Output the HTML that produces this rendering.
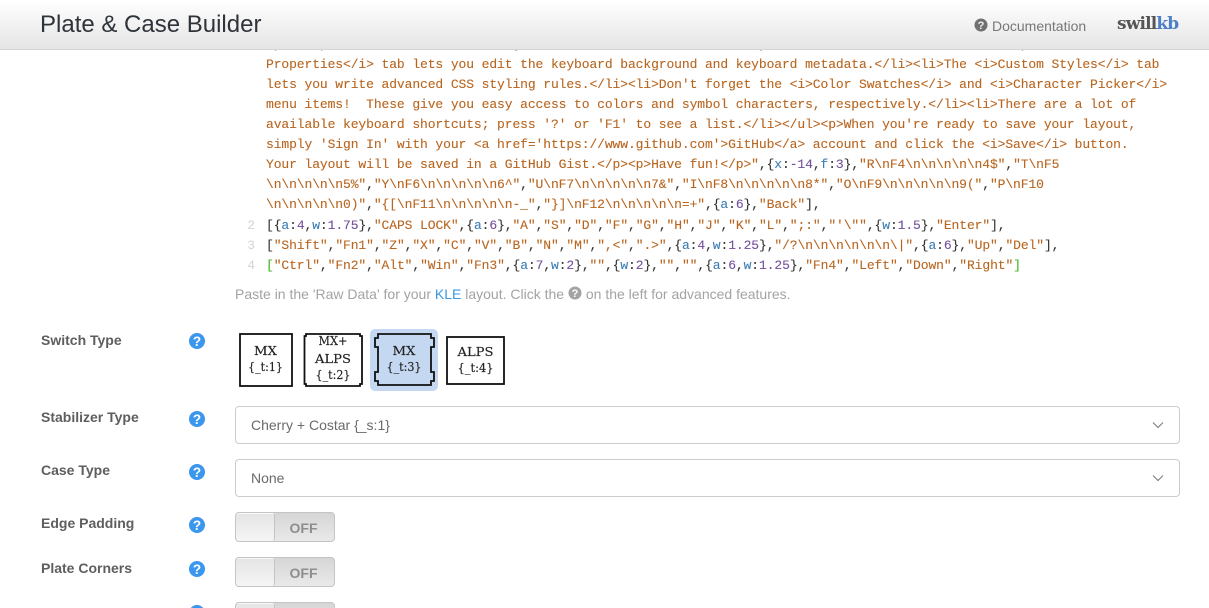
<!DOCTYPE html>
<html>
<head>
<meta charset="utf-8">
<style>
html,body{margin:0;padding:0;background:#fff;width:1209px;height:608px;overflow:hidden;}
#wrap{position:relative;width:1209px;height:608px;overflow:hidden;font-family:"Liberation Sans",Arial,sans-serif;}
.abs{position:absolute;white-space:pre;}
#hdr{position:absolute;left:0;top:0;width:1209px;height:49px;background:linear-gradient(#fff,#e5e5e5);border-bottom:1px solid #d4d4d4;z-index:5;}
.cl{position:absolute;left:266px;white-space:pre;font-family:"Liberation Mono",monospace;font-size:13px;letter-spacing:-.1px;line-height:20px;height:20px;color:#333;-webkit-text-stroke:.1px currentColor;}
.s{color:#b8651f;}
.k{color:#3a7db5;}
.n{color:#74509c;}
.g{color:#3cb521;}
.d{color:#333;}
.ln{position:absolute;left:238px;width:17px;text-align:right;font-family:"Liberation Mono",monospace;font-size:13px;line-height:20px;color:#d4d4d4;}
.lab{position:absolute;left:41px;font-size:14px;font-weight:bold;color:#5e5e5e;white-space:pre;line-height:16px;}
.q{position:absolute;left:189px;width:16px;height:16px;}
.sel{position:absolute;left:235px;width:943px;height:36px;border:1px solid #ccc;border-radius:4px;background:#fff;font-size:14px;color:#6a6a6a;line-height:36px;}
.sel span{position:absolute;left:15px;top:0;}
.sel svg{position:absolute;right:15px;top:14px;}
.tg{position:absolute;left:235px;width:98px;height:28px;border:1px solid #c4c4c4;border-radius:4px;background:linear-gradient(#d6d6d6,#e9e9e9);overflow:hidden;}
.tg i{position:absolute;left:0;top:0;width:39px;height:28px;background:linear-gradient(#e5e5e5,#f5f5f5);border-right:1px solid #c4c4c4;border-top:1px solid #f8f8f8;box-sizing:border-box;border-radius:3px;}
.tg b{position:absolute;left:39px;width:57px;top:0;text-align:center;font-size:14px;line-height:30px;color:#8e8e8e;font-style:normal;}
svg.keys text{font-family:"DejaVu Serif","Liberation Serif",serif;font-size:12px;fill:#222;stroke:#222;stroke-width:.15px;text-anchor:middle;}
</style>
</head>
<body>
<div id="wrap">
<div id="hdr">
  <div class="abs" style="left:40px;top:10px;font-size:24px;line-height:30px;color:#2f343a;">Plate &amp; Case Builder</div>
  <svg class="abs" style="left:974px;top:18px;" width="14" height="14" viewBox="0 0 14 14"><circle cx="7" cy="7" r="6.5" fill="#707070"/><text x="7" y="11" text-anchor="middle" font-size="11" font-weight="bold" fill="#f0f0f0" style="font-family:'Liberation Sans',sans-serif">?</text></svg>
  <div class="abs" style="left:992px;top:18px;font-size:14px;line-height:17px;color:#777;">Documentation</div>
  <div class="abs" style="left:1117px;top:14px;font-family:'DejaVu Serif',serif;font-size:17px;font-weight:bold;line-height:20px;letter-spacing:-.85px;color:#555;">swill<span style="color:#4d7fc4">kb</span></div>
</div>

<div class="cl s" style="top:35px;"> p     p                        g                               y                                 p</div>
<div class="cl s" style="top:55px;">Properties&lt;/i&gt; tab lets you edit the keyboard background and keyboard metadata.&lt;/li&gt;&lt;li&gt;The &lt;i&gt;Custom Styles&lt;/i&gt; tab</div>
<div class="cl s" style="top:75px;">lets you write advanced CSS styling rules.&lt;/li&gt;&lt;li&gt;Don't forget the &lt;i&gt;Color Swatches&lt;/i&gt; and &lt;i&gt;Character Picker&lt;/i&gt;</div>
<div class="cl s" style="top:95px;">menu items!  These give you easy access to colors and symbol characters, respectively.&lt;/li&gt;&lt;li&gt;There are a lot of</div>
<div class="cl s" style="top:115px;">available keyboard shortcuts; press '?' or 'F1' to see a list.&lt;/li&gt;&lt;/ul&gt;&lt;p&gt;When you're ready to save your layout,</div>
<div class="cl s" style="top:135px;">simply 'Sign In' with your &lt;a href='https://www.github.com'&gt;GitHub&lt;/a&gt; account and click the &lt;i&gt;Save&lt;/i&gt; button.</div>
<div class="cl s" style="top:155px;">Your layout will be saved in a GitHub Gist.&lt;/p&gt;&lt;p&gt;Have fun!&lt;/p&gt;"<span class="d">,{</span><span class="k">x</span><span class="d">:</span><span class="n">-14</span><span class="d">,</span><span class="k">f</span><span class="d">:</span><span class="n">3</span><span class="d">},</span>"R\nF4\n\n\n\n\n4$"<span class="d">,</span>"T\nF5</div>
<div class="cl s" style="top:175px;">\n\n\n\n\n5%"<span class="d">,</span>"Y\nF6\n\n\n\n\n6^"<span class="d">,</span>"U\nF7\n\n\n\n\n7&amp;"<span class="d">,</span>"I\nF8\n\n\n\n\n8*"<span class="d">,</span>"O\nF9\n\n\n\n\n9("<span class="d">,</span>"P\nF10</div>
<div class="cl s" style="top:195px;">\n\n\n\n\n0)"<span class="d">,</span>"{[\nF11\n\n\n\n\n-_"<span class="d">,</span>"}]\nF12\n\n\n\n\n=+"<span class="d">,{</span><span class="k">a</span><span class="d">:</span><span class="n">6</span><span class="d">},</span>"Back"<span class="d">],</span></div>
<div class="ln" style="top:216px;">2</div>
<div class="cl" style="top:216px;">[{<span class="k">a</span>:<span class="n">4</span>,<span class="k">w</span>:<span class="n">1.75</span>},<span class="s">"CAPS LOCK"</span>,{<span class="k">a</span>:<span class="n">6</span>},<span class="s">"A"</span>,<span class="s">"S"</span>,<span class="s">"D"</span>,<span class="s">"F"</span>,<span class="s">"G"</span>,<span class="s">"H"</span>,<span class="s">"J"</span>,<span class="s">"K"</span>,<span class="s">"L"</span>,<span class="s">";:"</span>,<span class="s">"'\""</span>,{<span class="k">w</span>:<span class="n">1.5</span>},<span class="s">"Enter"</span>],</div>
<div class="ln" style="top:236px;">3</div>
<div class="cl" style="top:236px;">[<span class="s">"Shift"</span>,<span class="s">"Fn1"</span>,<span class="s">"Z"</span>,<span class="s">"X"</span>,<span class="s">"C"</span>,<span class="s">"V"</span>,<span class="s">"B"</span>,<span class="s">"N"</span>,<span class="s">"M"</span>,<span class="s">",&lt;"</span>,<span class="s">".&gt;"</span>,{<span class="k">a</span>:<span class="n">4</span>,<span class="k">w</span>:<span class="n">1.25</span>},<span class="s">"/?\n\n\n\n\n\n\|"</span>,{<span class="k">a</span>:<span class="n">6</span>},<span class="s">"Up"</span>,<span class="s">"Del"</span>],</div>
<div class="ln" style="top:256px;">4</div>
<div class="cl" style="top:256px;"><span class="g">[</span><span class="s">"Ctrl"</span>,<span class="s">"Fn2"</span>,<span class="s">"Alt"</span>,<span class="s">"Win"</span>,<span class="s">"Fn3"</span>,{<span class="k">a</span>:<span class="n">7</span>,<span class="k">w</span>:<span class="n">2</span>},<span class="s">""</span>,{<span class="k">w</span>:<span class="n">2</span>},<span class="s">""</span>,<span class="s">""</span>,{<span class="k">a</span>:<span class="n">6</span>,<span class="k">w</span>:<span class="n">1.25</span>},<span class="s">"Fn4"</span>,<span class="s">"Left"</span>,<span class="s">"Down"</span>,<span class="s">"Right"</span><span class="g">]</span></div>

<div class="abs" style="left:235px;top:286px;font-size:14px;line-height:17px;color:#a3a3a3;">Paste in the 'Raw Data' for your <span style="color:#3b97e3">KLE</span> layout. Click the <svg width="14" height="14" viewBox="0 0 14 14" style="vertical-align:-1px"><circle cx="7" cy="7" r="6.5" fill="#a3a3a3"/><text x="7" y="11" text-anchor="middle" font-size="11" font-weight="bold" fill="#fff" style="font-family:'Liberation Sans',sans-serif">?</text></svg> on the left for advanced features.</div>

<div class="lab" style="top:332px;">Switch Type</div>
<div class="lab" style="top:409px;">Stabilizer Type</div>
<div class="lab" style="top:462px;">Case Type</div>
<div class="lab" style="top:515px;">Edge Padding</div>
<div class="lab" style="top:560px;">Plate Corners</div>

<svg class="q" style="top:333px" viewBox="0 0 16 16"><circle cx="8" cy="8" r="8" fill="#3b97ee"/><text x="8" y="12.8" text-anchor="middle" font-size="13.500" font-weight="bold" fill="#fff" style="font-family:'Liberation Sans',sans-serif">?</text></svg>
<svg class="q" style="top:411px" viewBox="0 0 16 16"><circle cx="8" cy="8" r="8" fill="#3b97ee"/><text x="8" y="12.8" text-anchor="middle" font-size="13.500" font-weight="bold" fill="#fff" style="font-family:'Liberation Sans',sans-serif">?</text></svg>
<svg class="q" style="top:464px" viewBox="0 0 16 16"><circle cx="8" cy="8" r="8" fill="#3b97ee"/><text x="8" y="12.8" text-anchor="middle" font-size="13.500" font-weight="bold" fill="#fff" style="font-family:'Liberation Sans',sans-serif">?</text></svg>
<svg class="q" style="top:517px" viewBox="0 0 16 16"><circle cx="8" cy="8" r="8" fill="#3b97ee"/><text x="8" y="12.8" text-anchor="middle" font-size="13.500" font-weight="bold" fill="#fff" style="font-family:'Liberation Sans',sans-serif">?</text></svg>
<svg class="q" style="top:561px" viewBox="0 0 16 16"><circle cx="8" cy="8" r="8" fill="#3b97ee"/><text x="8" y="12.8" text-anchor="middle" font-size="13.500" font-weight="bold" fill="#fff" style="font-family:'Liberation Sans',sans-serif">?</text></svg>
<svg class="q" style="top:605px" viewBox="0 0 16 16"><circle cx="8" cy="8" r="8" fill="#3b97ee"/></svg>

<svg class="abs keys" style="left:0;top:0;" width="1209" height="608" viewBox="0 0 1209 608">
  <rect x="240" y="334" width="52" height="52" fill="#fff" stroke="#111" stroke-width="1.800"/>
  <text x="265.500" y="355" textLength="23" lengthAdjust="spacingAndGlyphs">MX</text>
  <text x="265.500" y="371" textLength="35" lengthAdjust="spacingAndGlyphs">{_t:1}</text>

  <path d="M306 334H360V336H362V384H360V386H306V384H304.500V336H306Z" fill="#fff" stroke="#111" stroke-width="1.800"/>
  <text x="333" y="345" textLength="29" lengthAdjust="spacingAndGlyphs">MX+</text>
  <text x="333" y="363" textLength="36" lengthAdjust="spacingAndGlyphs">ALPS</text>
  <text x="333" y="379" textLength="35" lengthAdjust="spacingAndGlyphs">{_t:2}</text>

  <rect x="370" y="329" width="68" height="62" rx="5" fill="#c5d8f2"/>
  <path d="M378 334H431V338H434V347H431V372H434V381H431V385H378V381H375V372H378V347H375V338H378Z" fill="#c5d8f2" stroke="#111" stroke-width="1.800"/>
  <text x="404" y="355" textLength="23" lengthAdjust="spacingAndGlyphs">MX</text>
  <text x="404" y="371" textLength="35" lengthAdjust="spacingAndGlyphs">{_t:3}</text>

  <rect x="447" y="337" width="57" height="47" fill="#fff" stroke="#111" stroke-width="1.800"/>
  <text x="475.500" y="356" textLength="36" lengthAdjust="spacingAndGlyphs">ALPS</text>
  <text x="475.500" y="372" textLength="36" lengthAdjust="spacingAndGlyphs">{_t:4}</text>
</svg>

<div class="sel" style="top:406px;"><span>Cherry + Costar {_s:1}</span><svg width="12" height="8" viewBox="0 0 12 8"><path d="M1 1.500L6 6.500L11 1.500" fill="none" stroke="#777" stroke-width="1"/></svg></div>
<div class="sel" style="top:459px;"><span>None</span><svg width="12" height="8" viewBox="0 0 12 8"><path d="M1 1.500L6 6.500L11 1.500" fill="none" stroke="#777" stroke-width="1"/></svg></div>

<div class="tg" style="top:512px;"><i></i><b>OFF</b></div>
<div class="tg" style="top:557px;"><i></i><b>OFF</b></div>
<div class="tg" style="top:602px;"><i></i></div>
</div>
</body>
</html>
